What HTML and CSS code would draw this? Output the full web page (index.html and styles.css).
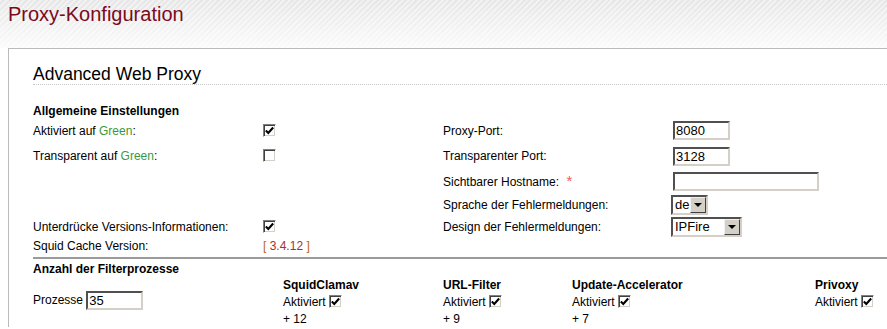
FILE: index.html
```html
<!DOCTYPE html>
<html lang="de">
<head>
    <meta charset="UTF-8">
    <title>Proxy-Konfiguration</title>
    <link rel="stylesheet" href="styles.css">
</head>
<body>
    <div class="header">
        <h1>Proxy-Konfiguration</h1>
    </div>
    <div class="box">
        <h2>Advanced Web Proxy</h2>

        <h3 class="section-title">Allgemeine Einstellungen</h3>
        <div class="settings">
            <div>Aktiviert auf <span class="green">Green</span>:</div>
            <div><span class="cb checked"><svg viewBox="0 0 9 9"><path d="M1.5 4.5 L3.5 6.5 L7.5 2"/></svg></span></div>
            <div>Proxy-Port:</div>
            <div><span class="input small">8080</span></div>

            <div>Transparent auf <span class="green">Green</span>:</div>
            <div><span class="cb"></span></div>
            <div>Transparenter Port:</div>
            <div><span class="input small">3128</span></div>

            <div></div>
            <div></div>
            <div>Sichtbarer Hostname: <span class="req">*</span></div>
            <div><span class="input wide"></span></div>

            <div></div>
            <div></div>
            <div>Sprache der Fehlermeldungen:</div>
            <div><span class="select sel-de"><span class="val">de</span><span class="btn"><i class="arrow"></i></span></span></div>

            <div>Unterdrücke Versions-Informationen:</div>
            <div><span class="cb checked"><svg viewBox="0 0 9 9"><path d="M1.5 4.5 L3.5 6.5 L7.5 2"/></svg></span></div>
            <div>Design der Fehlermeldungen:</div>
            <div><span class="select sel-design"><span class="val">IPFire</span><span class="btn"><i class="arrow"></i></span></span></div>

            <div>Squid Cache Version:</div>
            <div><span class="bracket">[</span> <span class="version">3.4.12</span> <span class="bracket">]</span></div>
            <div></div>
            <div></div>
        </div>

        <hr class="sep">

        <h3 class="section-title filter-title">Anzahl der Filterprozesse</h3>
        <div class="filters">
            <div class="proc">Prozesse <span class="input small">35</span></div>

            <div class="fname c2">SquidClamav</div>
            <div class="c2 r2">Aktiviert <span class="cb checked"><svg viewBox="0 0 9 9"><path d="M1.5 4.5 L3.5 6.5 L7.5 2"/></svg></span></div>
            <div class="c2 r3">+ 12</div>

            <div class="fname c3">URL-Filter</div>
            <div class="c3 r2">Aktiviert <span class="cb checked"><svg viewBox="0 0 9 9"><path d="M1.5 4.5 L3.5 6.5 L7.5 2"/></svg></span></div>
            <div class="c3 r3">+ 9</div>

            <div class="fname c4">Update-Accelerator</div>
            <div class="c4 r2">Aktiviert <span class="cb checked"><svg viewBox="0 0 9 9"><path d="M1.5 4.5 L3.5 6.5 L7.5 2"/></svg></span></div>
            <div class="c4 r3">+ 7</div>

            <div class="fname c5">Privoxy</div>
            <div class="c5 r2">Aktiviert <span class="cb checked"><svg viewBox="0 0 9 9"><path d="M1.5 4.5 L3.5 6.5 L7.5 2"/></svg></span></div>
        </div>
    </div>
</body>
</html>
```

FILE: styles.css
```css
body {
    margin: 0;
    font-family: "Liberation Sans", Arial, sans-serif;
    font-size: 12px;
    color: #000;
    background: #fff;
    overflow: hidden;
}
.header {
    height: 48px;
    padding-left: 8px;
    background:
        repeating-linear-gradient(135deg, rgba(255, 255, 255, 0.45) 0 2px, transparent 2px 4px),
        linear-gradient(#e6e6e6, #fbfbfb);
}
h1 {
    margin: 0;
    padding-top: 4px;
    font-size: 20px;
    line-height: 21px;
    font-weight: normal;
    color: #7a0a1c;
}
.box {
    margin-left: 8px;
    border-top: 1px solid #bbb;
    border-left: 1px solid #bbb;
    padding-left: 24px;
}
h2 {
    margin: 15px 0 0 0;
    font-size: 17.5px;
    line-height: 20px;
    font-weight: normal;
    border-bottom: 1px dotted #c8c8c8;
}
.section-title {
    margin: 19px 0 0 0;
    font-size: 12px;
    line-height: 14px;
    font-weight: bold;
}
.settings {
    display: grid;
    grid-template-columns: 230px 180px 230px 1fr;
    grid-template-rows: 25px 26px 25px 22px 22px 16px;
    align-items: center;
}
.green {
    color: #3a9a3a;
}
.req {
    margin-left: 4px;
    color: #ee5a55;
    font-size: 15px;
    vertical-align: top;
    line-height: 12px;
}
.bracket {
    color: #c0640a;
}
.version {
    color: #a63030;
}

/* Windows-artige Checkbox */
.cb {
    display: inline-block;
    box-sizing: border-box;
    width: 13px;
    height: 13px;
    background: #fff;
    border: 1px solid;
    border-color: #808080 #fff #fff #808080;
    box-shadow: inset 1px 1px #404040, inset -1px -1px #d4d0c8;
    vertical-align: -2px;
}
.cb svg {
    display: block;
    width: 11px;
    height: 11px;
}
.cb svg path {
    fill: none;
    stroke: #000;
    stroke-width: 1.7;
}

.input {
    display: inline-block;
    box-sizing: border-box;
    height: 19px;
    padding: 0 1px;
    border: 2px solid;
    border-color: #505050 #d4d0c8 #d4d0c8 #505050;
    font-size: 13px;
    line-height: 15px;
    vertical-align: middle;
    background: #fff;
}
.input.small {
    width: 57px;
}
.input.wide {
    width: 146px;
}

.select {
    display: inline-flex;
    box-sizing: border-box;
    height: 20px;
    margin-left: -2px;
    border: 2px solid;
    border-color: #505050 #d4d0c8 #d4d0c8 #505050;
    background: #fff;
    vertical-align: middle;
}
.sel-de {
    width: 37px;
}
.sel-design {
    width: 71px;
}
.select .val {
    flex: 1;
    padding-left: 2px;
    font-size: 13px;
    line-height: 16px;
}
.select .btn {
    box-sizing: border-box;
    width: 16px;
    height: 16px;
    background: #d4d0c8;
    border: 1px solid;
    border-color: #f0f0f0 #404040 #404040 #f0f0f0;
    display: flex;
    align-items: center;
    justify-content: center;
}
.arrow {
    width: 0;
    height: 0;
    border-left: 4px solid transparent;
    border-right: 4px solid transparent;
    border-top: 4px solid #000;
}

.sep {
    margin: 3px 0 0 0;
    border: none;
    border-top: 2px solid #9a9a9a;
    height: 0;
}
.filter-title {
    margin-top: 3px;
}
.filters {
    display: grid;
    grid-template-columns: 250px 160px 129px 243px 1fr;
    grid-template-rows: 17px 18px 16px;
    align-items: center;
}
.fname {
    font-weight: bold;
    grid-row: 1;
}
.proc {
    grid-column: 1;
    grid-row: 2;
    margin-top: -3px;
}
.c2 { grid-column: 2; }
.c3 { grid-column: 3; }
.c4 { grid-column: 4; }
.c5 { grid-column: 5; }
.r2 { grid-row: 2; }
.r3 { grid-row: 3; }
```
